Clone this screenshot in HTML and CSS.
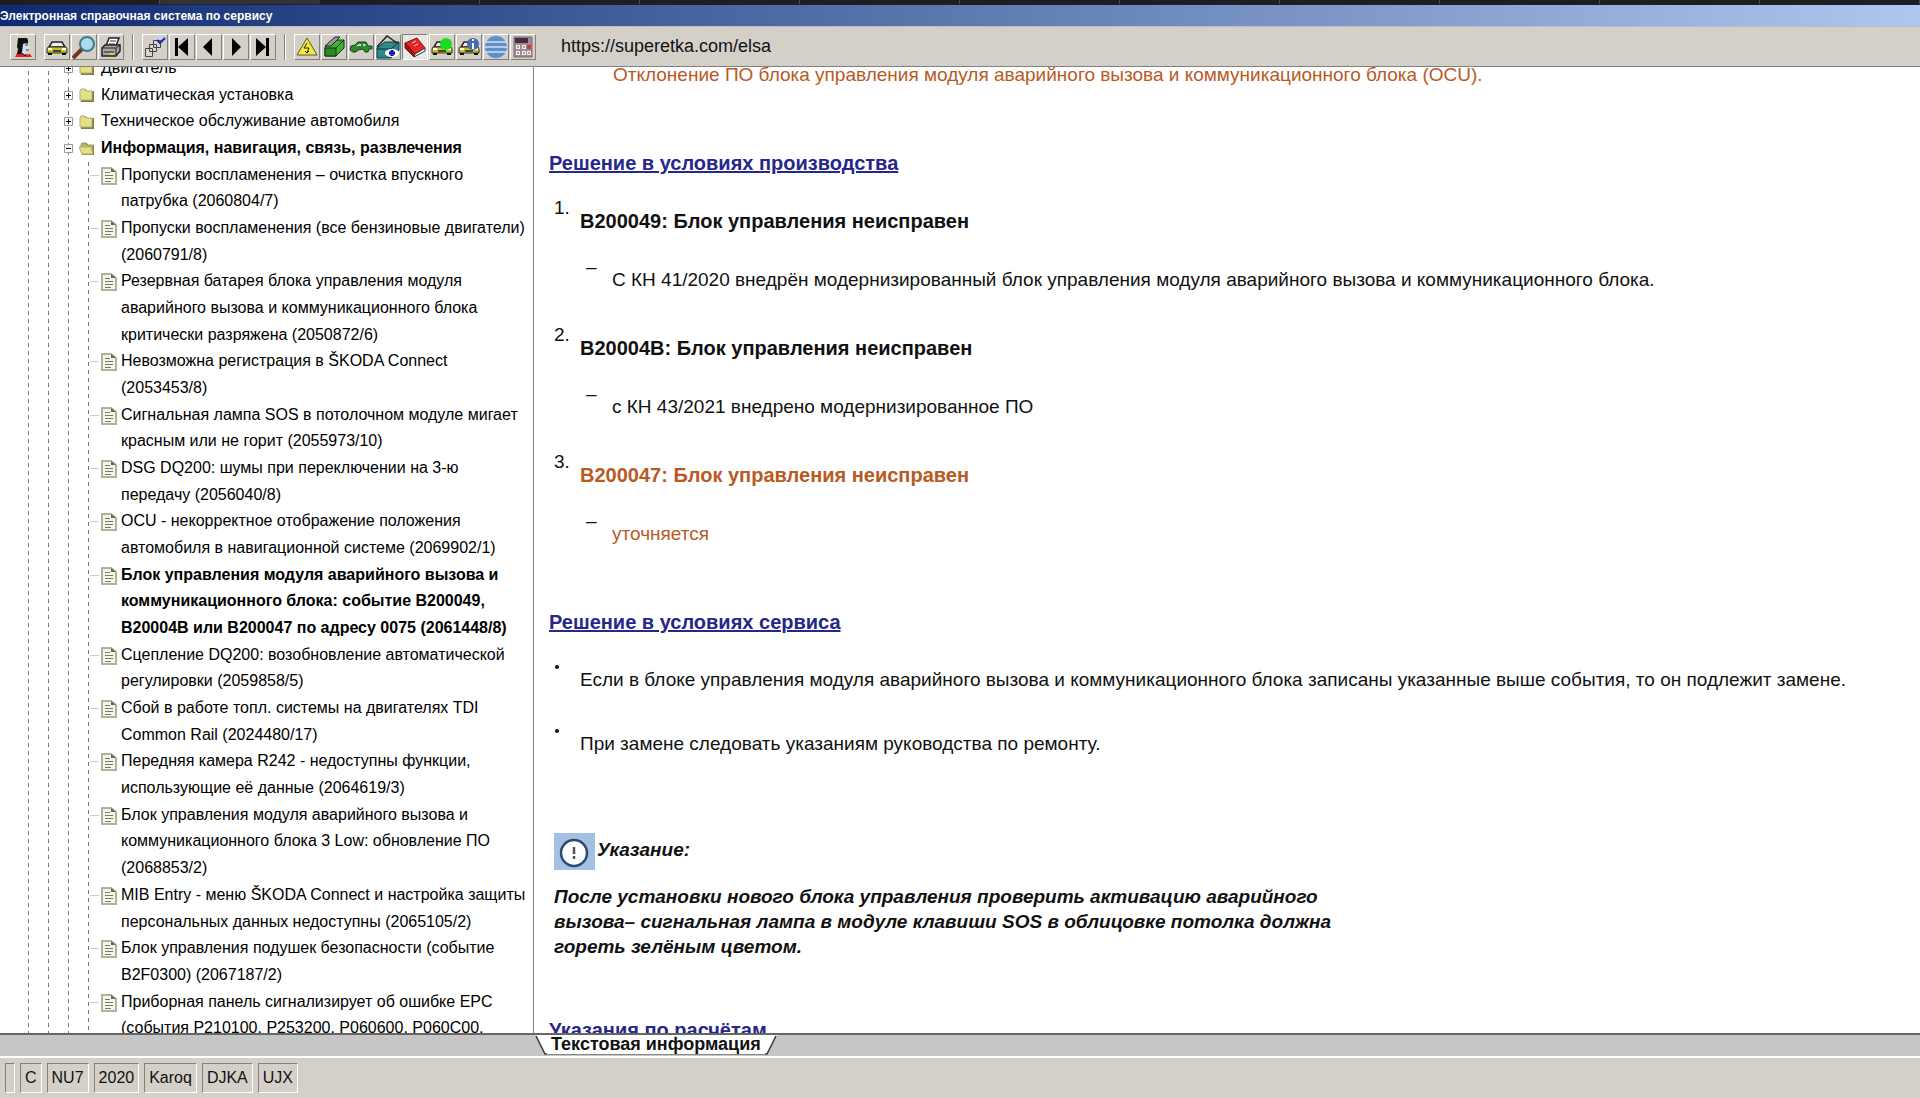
FILE: index.html
```html
<!DOCTYPE html>
<html lang="ru">
<head>
<meta charset="utf-8">
<title>Электронная справочная система по сервису</title>
<link rel="stylesheet" href="styles.css">
</head>
<body>
<div class="browser-strip"></div>
<header class="titlebar"><h1>Электронная справочная система по сервису</h1></header>

<nav class="toolbar" aria-label="Инструменты">
  <div class="group">
    <button class="tool" aria-label="Пользователь"><svg viewBox="0 0 24 24"><path d="M4 22l2-4h5l3 2 5-1 2 3z" fill="#e02020"/><path d="M7 3h9l1 2v3l-5 1v6l-2 4H6l1-5-1-2z" fill="#111"/><path d="M12 9l5-1 1 3 2 2-2 1v3h-3l-1 2-3-1z" fill="#cfdff2"/><path d="M14 10h3M15 15h3" stroke="#345" /><path d="M11 18l3 3 1-2M16 8v1" stroke="#111" fill="none"/></svg></button>
  </div>
  <div class="group">
    <button class="tool" aria-label="Автомобиль"><svg viewBox="0 0 24 24"><use href="#car"/></svg></button>
    <button class="tool" aria-label="Поиск"><svg viewBox="0 0 24 24"><path d="M1 23l9-9" stroke="#6b3a1c" stroke-width="4"/><circle cx="15" cy="9" r="7" fill="#a8dcea" stroke="#3c7a8c" stroke-width="2"/></svg></button>
    <button class="tool" aria-label="Печать"><svg viewBox="0 0 24 24"><path d="M7 11l3-8h10l-3 8z" fill="#fff" stroke="#222" stroke-width="1.5"/><path d="M11 6h6M10 9h6" stroke="#333"/><path d="M3 13l3-3h15v6l-4 5H3z" fill="#a8a8a8" stroke="#222" stroke-width="1.500"/><path d="M3 13h14l4-3M17 13v7M5 17h10" stroke="#222" fill="none"/><path d="M11 18h4v2h-4z" fill="#dd2"/></svg></button>
  </div>
  <div class="divider"></div>
  <div class="group">
    <button class="tool" aria-label="Выбор"><svg viewBox="0 0 24 24" fill="#d8d6d0" stroke="#444"><path d="M10.500 5.500h7v7h-7zM6.500 9.500h7v7h-7zM2.500 13.500h7v8h-7z"/><path d="M14 5l3 3 5-5" fill="none" stroke="#1a28c8" stroke-width="2"/></svg></button>
    <button class="tool" aria-label="В начало"><svg viewBox="0 0 24 24"><path d="M5 3h3v18H5zM18 3v18L8 12z"/></svg></button>
    <button class="tool" aria-label="Назад"><svg viewBox="0 0 24 24"><path d="M15 3v18L6 12z"/></svg></button>
    <button class="tool" aria-label="Вперёд"><svg viewBox="0 0 24 24"><path d="M8 3v18l9-9z"/></svg></button>
    <button class="tool" aria-label="В конец"><svg viewBox="0 0 24 24"><path d="M15 3h3v18h-3zM5 3v18l10-9z"/></svg></button>
  </div>
  <div class="divider"></div>
  <div class="group">
    <button class="tool" aria-label="Электросхемы"><svg viewBox="0 0 24 24"><path d="M12 3l10 17H2z" fill="#f4ec30" stroke="#555"/><path d="M12 8l-3 5h5l-2 5M10 16l2 2 2-2" fill="none" stroke="#222"/></svg></button>
    <button class="tool" aria-label="Ремонт"><svg viewBox="0 0 24 24"><path d="M3 12l9-7h10v8l-8 8H3z" fill="#44b02c" stroke="#132"/><path d="M3 13h11v8H3z" fill="#2c8a20" stroke="#132"/><path d="M14 13l8-8" stroke="#132"/><path d="M3 11L13 2h5L9 11z" fill="#999" stroke="#222"/></svg></button>
    <button class="tool" aria-label="Кузовные работы"><svg viewBox="0 0 24 24"><path d="M1 15l1-4 4-1 3-3h8l2 4h4v3h-3l-1 3h-3l-2-3-5 1-2 2H4z" fill="#2f8a28" stroke="#142"/><path d="M7 11l3-2h2v2zM14 9h2l1 2h-3z" fill="#d4d0c8"/></svg></button>
    <button class="tool" aria-label="Обслуживание"><svg viewBox="0 0 24 24"><path d="M1 13l8-6h14v8l-8 8H1z" fill="#2f8a8a" stroke="#134"/><path d="M1 14h14l8-7" fill="none" stroke="#134"/><path d="M1 12L11 1l10 7" fill="none" stroke="#222" stroke-width="1.500"/><ellipse cx="16" cy="18" rx="7" ry="4" fill="#fff"/><path d="M16 15v6M13 18h6" stroke="#11c" stroke-width="3"/></svg></button>
    <button class="tool pressed" aria-label="Техническая информация" aria-pressed="true"><svg viewBox="0 0 24 24"><path d="M2 8L14 3l8 10-10 6z" fill="#e82424" stroke="#711"/><path d="M2 8v5l9 9 1-3z" fill="#a01414" stroke="#611"/><path d="M12 19l10-6v3l-11 6z" fill="#fff" stroke="#333"/><path d="M9 8l4-2M11 11l4-2" stroke="#fcc"/></svg></button>
    <button class="tool" aria-label="Состояние"><svg viewBox="0 0 24 24"><use href="#car"/><circle cx="16" cy="9" r="6" fill="#18e020"/></svg></button>
    <button class="tool" aria-label="Сведения об автомобиле"><svg viewBox="0 0 24 24"><use href="#car"/><circle cx="16" cy="9" r="6" fill="#3f6cb4"/><path d="M16 4v2M16 8v6" stroke="#fff" stroke-width="2"/></svg></button>
    <button class="tool" aria-label="Сеть"><svg viewBox="0 0 24 24"><circle cx="12" cy="12" r="11" fill="#5a90cc"/><path d="M1 7h22M1 12h22M1 17h22" stroke="#d8e0ea" stroke-width="1.500"/></svg></button>
    <button class="tool" aria-label="Калькулятор"><svg viewBox="0 0 24 24"><path d="M3 2h18v20H3z" fill="#9c8c96" stroke="#7c6c78"/><path d="M4 3h13v5H4z" fill="#4c2c3c"/><path d="M5 10h4v4H5zM11 10h4v4h-4zM5 16h4v4H5zM11 16h4v4h-4zM16 16h4v4h-4z" fill="#eee"/><path d="M16 10h4v4h-4z" fill="#d33"/><path d="M6 12h2M12 12h2M6 18h2M12 18h2M17 18h2" stroke="#655"/></svg></button>
  </div>
  <span class="address">https://superetka.com/elsa</span>
</nav>

<main class="workspace">
  <aside class="sidebar">
    <ul class="tree">
      <li class="folder"><svg class="toggle" viewBox="0 0 9 9"><path class="box" d="M.5.5h8v8h-8z"/><path d="M2 4.500h5M4.500 2v5"/></svg><svg class="ico" viewBox="0 0 16 16"><use href="#dir"/></svg><a href="#">Двигатель</a></li>
      <li class="folder"><svg class="toggle" viewBox="0 0 9 9"><path class="box" d="M.5.5h8v8h-8z"/><path d="M2 4.500h5M4.500 2v5"/></svg><svg class="ico" viewBox="0 0 16 16"><use href="#dir"/></svg><a href="#">Климатическая установка</a></li>
      <li class="folder"><svg class="toggle" viewBox="0 0 9 9"><path class="box" d="M.5.5h8v8h-8z"/><path d="M2 4.500h5M4.500 2v5"/></svg><svg class="ico" viewBox="0 0 16 16"><use href="#dir"/></svg><a href="#">Техническое обслуживание автомобиля</a></li>
      <li class="folder open"><svg class="toggle" viewBox="0 0 9 9"><path class="box" d="M.5.5h8v8h-8z"/><path d="M2 4.500h5"/></svg><svg class="ico" viewBox="0 0 16 16"><use href="#dir-open"/></svg><a href="#">Информация, навигация, связь, развлечения</a></li>
      <li>
        <ul class="docs">
          <li><svg class="ico" viewBox="0 0 16 18"><use href="#doc"/></svg><a href="#">Пропуски воспламенения – очистка впускного<br>патрубка (2060804/7)</a></li>
          <li><svg class="ico" viewBox="0 0 16 18"><use href="#doc"/></svg><a href="#">Пропуски воспламенения (все бензиновые двигатели)<br>(2060791/8)</a></li>
          <li><svg class="ico" viewBox="0 0 16 18"><use href="#doc"/></svg><a href="#">Резервная батарея блока управления модуля<br>аварийного вызова и коммуникационного блока<br>критически разряжена (2050872/6)</a></li>
          <li><svg class="ico" viewBox="0 0 16 18"><use href="#doc"/></svg><a href="#">Невозможна регистрация в ŠKODA Connect<br>(2053453/8)</a></li>
          <li><svg class="ico" viewBox="0 0 16 18"><use href="#doc"/></svg><a href="#">Сигнальная лампа SOS в потолочном модуле мигает<br>красным или не горит (2055973/10)</a></li>
          <li><svg class="ico" viewBox="0 0 16 18"><use href="#doc"/></svg><a href="#">DSG DQ200: шумы при переключении на 3-ю<br>передачу (2056040/8)</a></li>
          <li><svg class="ico" viewBox="0 0 16 18"><use href="#doc"/></svg><a href="#">OCU - некорректное отображение положения<br>автомобиля в навигационной системе (2069902/1)</a></li>
          <li class="current"><svg class="ico" viewBox="0 0 16 18"><use href="#doc"/></svg><a href="#" aria-current="page">Блок управления модуля аварийного вызова и<br>коммуникационного блока: событие B200049,<br>B20004B или B200047 по адресу 0075 (2061448/8)</a></li>
          <li><svg class="ico" viewBox="0 0 16 18"><use href="#doc"/></svg><a href="#">Сцепление DQ200: возобновление автоматической<br>регулировки (2059858/5)</a></li>
          <li><svg class="ico" viewBox="0 0 16 18"><use href="#doc"/></svg><a href="#">Сбой в работе топл. системы на двигателях TDI<br>Common Rail (2024480/17)</a></li>
          <li><svg class="ico" viewBox="0 0 16 18"><use href="#doc"/></svg><a href="#">Передняя камера R242 - недоступны функции,<br>использующие её данные (2064619/3)</a></li>
          <li><svg class="ico" viewBox="0 0 16 18"><use href="#doc"/></svg><a href="#">Блок управления модуля аварийного вызова и<br>коммуникационного блока 3 Low: обновление ПО<br>(2068853/2)</a></li>
          <li><svg class="ico" viewBox="0 0 16 18"><use href="#doc"/></svg><a href="#">MIB Entry - меню ŠKODA Connect и настройка защиты<br>персональных данных недоступны (2065105/2)</a></li>
          <li><svg class="ico" viewBox="0 0 16 18"><use href="#doc"/></svg><a href="#">Блок управления подушек безопасности (событие<br>B2F0300) (2067187/2)</a></li>
          <li><svg class="ico" viewBox="0 0 16 18"><use href="#doc"/></svg><a href="#">Приборная панель сигнализирует об ошибке EPC<br>(события P210100, P253200, P060600, P060C00,</a></li>
        </ul>
      </li>
    </ul>
  </aside>

  <article class="document">
    <p class="cause changed">Отклонение ПО блока управления модуля аварийного вызова и коммуникационного блока (OCU).</p>

    <h2><a href="#">Решение в условиях производства</a></h2>
    <ol class="steps">
      <li><span class="marker">1.</span><div class="body"><h3>B200049: Блок управления неисправен</h3>
        <div class="sub"><span>–</span><p>С КН 41/2020 внедрён модернизированный блок управления модуля аварийного вызова и коммуникационного блока.</p></div></div></li>
      <li><span class="marker">2.</span><div class="body"><h3>B20004B: Блок управления неисправен</h3>
        <div class="sub"><span>–</span><p>с КН 43/2021 внедрено модернизированное ПО</p></div></div></li>
      <li><span class="marker">3.</span><div class="body"><h3 class="changed">B200047: Блок управления неисправен</h3>
        <div class="sub"><span>–</span><p class="changed">уточняется</p></div></div></li>
    </ol>

    <h2><a href="#">Решение в условиях сервиса</a></h2>
    <ul class="bullets">
      <li><span class="dot"></span><p>Если в блоке управления модуля аварийного вызова и коммуникационного блока записаны указанные выше события, то он подлежит замене.</p></li>
      <li><span class="dot"></span><p>При замене следовать указаниям руководства по ремонту.</p></li>
    </ul>

    <section class="note">
      <h4><svg viewBox="0 0 41 37"><path d="M0 0h41v37H0z" fill="#a3c1e4"/><circle cx="20" cy="20" r="13" fill="#fff" stroke="#2c4a70" stroke-width="2.500"/><path d="M20 14v7M20 23v3" stroke="#555" stroke-width="2.500"/></svg>Указание:</h4>
      <p>После установки нового блока управления проверить активацию аварийного<br>вызова– сигнальная лампа в модуле клавиши SOS в облицовке потолка должна<br>гореть зелёным цветом.</p>
    </section>

    <h2><a href="#">Указания по расчётам</a></h2>
  </article>
</main>

<div class="tabbar">
  <button class="tab"><svg viewBox="0 0 12 20"><path d="M0 0h12v20h-2z" fill="#fff"/><path d="M1 1l9 18h2" fill="none" stroke="#333" stroke-width="1.500"/></svg><span>Текстовая информация</span><svg viewBox="0 0 12 20"><path d="M12 0H0v20h2z" fill="#fff"/><path d="M11 1L2 19H0" fill="none" stroke="#333" stroke-width="1.500"/></svg></button>
</div>

<footer class="statusbar">
  <span></span><span>C</span><span>NU7</span><span>2020</span><span>Karoq</span><span>DJKA</span><span>UJX</span>
</footer>

<svg class="defs" aria-hidden="true">
  <symbol id="car" viewBox="0 0 24 24"><path d="M7 7h10l3 5H4z" fill="#eee" stroke="#222" stroke-width="1.500"/><path d="M3 12h18l1 2v4H2v-4z" fill="#c8c020" stroke="#333"/><path d="M3 18h4v2H3zM17 18h4v2h-4z" fill="#111"/><path d="M8 15h8v2H8z" fill="#443"/><path d="M3 13h4v2H3zM17 13h4v2h-4z" fill="#fff"/></symbol>
  <symbol id="dir" viewBox="0 0 16 16"><path d="M1 4l1-2h5l1 2h7v11H2z" fill="#7d7d4a"/><path d="M1 4l1-2h4l1 2h6v9H1z" fill="#e4e08a" stroke="#b4b068"/></symbol>
  <symbol id="dir-open" viewBox="0 0 16 16"><path d="M2 5l1-2h5l1 2h6v10H3z" fill="#7d7d4a"/><path d="M2 5l1-2h4l1 2h6v6H2z" fill="#b8b468" stroke="#97935a"/><path d="M0 7h12l2 7H3z" fill="#e4e08a" stroke="#b4b068"/></symbol>
  <symbol id="doc" viewBox="0 0 16 18"><path d="M1 1h9l5 4v12H1z" fill="#f6f6e4" stroke="#b0b29c" stroke-width="2"/><path d="M10 1v4h5z" fill="#666"/><path d="M4 5.500h5M4 8.500h8M4 11.500h8M4 14.500h6" stroke="#777"/></symbol>
</svg>
</body>
</html>
```
FILE: styles.css
```css
* { box-sizing: border-box; }
body, h1, h2, h3, h4, p, ul, ol { margin: 0; padding: 0; }
ul, ol { list-style: none; }
a { color: inherit; text-decoration: none; }

body {
  display: flex;
  flex-direction: column;
  height: 100vh;
  overflow: hidden;
  background: #d4d0c8;
  color: #111;
  font-family: "Liberation Sans", Arial, sans-serif;
  font-size: 16px;
}

.browser-strip {
  flex: none;
  height: 4px;
  background:
    linear-gradient(#333, #333) 160px 0 / 160px 4px no-repeat,
    repeating-linear-gradient(90deg, #1e1e1e 0 159px, #4a4a4a 159px 160px);
}

.titlebar {
  flex: none;
  height: 23px;
  border-top: 1px solid #16213f;
  border-bottom: 1px solid #b8bccb;
  background: linear-gradient(90deg, #0f2a70, #adc8ee);
}
.titlebar h1 { color: #fff; font-size: 12px; line-height: 22px; }

.toolbar {
  flex: none;
  display: flex;
  align-items: center;
  height: 40px;
  padding-left: 10px;
  border-bottom: 1px solid #808080;
}
.group { display: flex; gap: 1px; margin-right: 8px; }
.tool {
  width: 26px;
  height: 26px;
  padding: 0;
  border: 1px solid;
  border-color: #fff #808080 #808080 #fff;
  background: #d4d0c8;
}
.tool svg { display: block; width: 24px; height: 24px; }
.tool.pressed { border-color: #808080 #fff #fff #808080; background: #eae8e4; }
.divider {
  width: 2px;
  height: 26px;
  margin-right: 8px;
  border-left: 1px solid #808080;
  border-right: 1px solid #fff;
}
.address { margin-left: 17px; font-size: 18px; }

.workspace { flex: 1; min-height: 0; display: flex; background: #fff; }
.sidebar {
  flex: none;
  width: 534px;
  overflow: hidden;
  border-right: 1px solid #808080;
}

/* The list is scrolled by half a row */
.tree {
  margin-top: -12px;
  padding-left: 64px;
  color: #000;
  line-height: 1.667;
  background:
    repeating-linear-gradient(#777 0 4px, transparent 4px 8px) 28px 0 / 1px 100% no-repeat,
    repeating-linear-gradient(#777 0 4px, transparent 4px 8px) 48px 0 / 1px 100% no-repeat,
    repeating-linear-gradient(#777 0 4px, transparent 4px 8px) 68px 0 / 1px 100% no-repeat;
}
.folder { display: flex; align-items: center; }
.toggle { width: 9px; height: 9px; stroke: #000; fill: none; }
.toggle .box { fill: #fff; stroke: #999; }
.ico { flex: none; width: 16px; height: 16px; }
.folder .ico { margin: 0 6px; }
.open, .current { font-weight: bold; }
.docs {
  margin-left: 24px;
  background: repeating-linear-gradient(#777 0 4px, transparent 4px 8px) 0 0 / 1px 100% no-repeat;
}
.docs li { display: flex; white-space: nowrap; }
.docs li::before {
  content: "";
  width: 9px;
  height: 1px;
  margin: 13px 2px 0 2px;
  background: #ccc;
}
.docs .ico { height: 18px; margin: 5px 4px 0 0; }

.document {
  flex: 1;
  min-width: 0;
  overflow: hidden;
  padding-left: 15px;
  font-size: 19px;
  line-height: 24px;
}
.changed { color: #b85a24; }
.cause { margin: -4px 0 0 64px; }
.document h2 { margin-top: 64px; color: #26268c; font-size: 20px; line-height: 24px; }
.document h2 a { text-decoration: underline; }
.document h3 { font-size: 20px; line-height: 24px; }

.steps { margin: 21px 0 0 5px; }
.steps > li { display: flex; padding-bottom: 31px; }
.marker { width: 26px; }
.body { margin-top: 13px; }
.sub { display: flex; margin: 22px 0 0 6px; }
.sub span { width: 26px; }
.sub p, .bullets p { margin-top: 13px; }
.steps + h2 { margin-top: 33px; }

.bullets { margin: 21px 0 0 5px; }
.bullets li { display: flex; padding-bottom: 27px; }
.dot { width: 4px; height: 4px; margin: 10px 21px 0 1px; border-radius: 2px; background: #111; }

.note { margin: 50px 0 0 5px; font-weight: bold; font-style: italic; }
.note h4 { display: flex; gap: 2px; font-size: 19px; line-height: 34px; }
.note svg { width: 41px; height: 37px; }
.note p { margin-top: 14px; font-size: 19px; line-height: 25px; }
.note + h2 { margin-top: 59px; }

.tabbar {
  flex: none;
  height: 25px;
  padding-left: 535px;
  border-top: 2px solid #666;
  border-bottom: 2px solid #fff;
  background: #c6c6c6;
}
.tab {
  display: flex;
  padding: 0;
  border: 0;
  background: none;
  color: #111;
  font: bold 18px/19px "Liberation Sans", Arial, sans-serif;
}
.tab span { padding: 0 4px; border-bottom: 1px solid #888; background: #fff; }
.tab svg { width: 12px; height: 20px; }

.statusbar { flex: none; display: flex; gap: 5px; height: 40px; padding: 5px; }
.statusbar span {
  min-width: 10px;
  height: 30px;
  padding: 0 4px;
  border: 1px solid;
  border-color: #808080 #fff #fff #808080;
  line-height: 28px;
}
.defs { display: none; }
```
